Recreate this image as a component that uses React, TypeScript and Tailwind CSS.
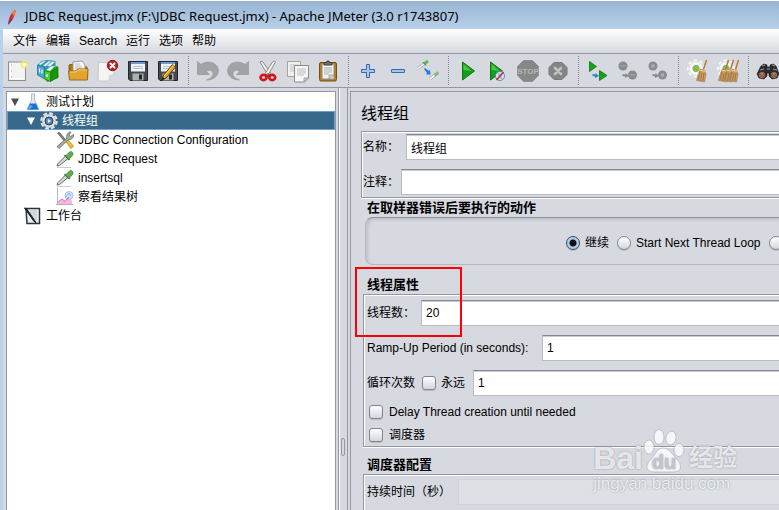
import type { ReactNode } from "react";

const LATIN_CJK = "font-['Liberation_Sans','Noto_Sans_CJK_SC',sans-serif]";

/* ---------- toolbar drawings (24 x 24) ---------- */

function Svg({ children, size = 24 }: { children: ReactNode; size?: number }) {
  return (
    <svg width={size} height={size} viewBox={`0 0 ${size} ${size}`} className="block shrink-0" aria-hidden="true">
      {children}
    </svg>
  );
}

const NewIcon = () => (
  <Svg>
    <rect x="2.500" y="3" width="17" height="18.500" fill="#f4f4f3" stroke="#8d8f8c" />
    <path d="M4.500 5v14.500h13" fill="none" stroke="#fff" />
    <path d="M5.500 5.500v1M5.500 11.500v1M5.500 17.500v1" stroke="#999" />
    <circle cx="18.500" cy="5.500" r="4" fill="#f7ea72" opacity=".75" />
    <circle cx="18.500" cy="5.500" r="1.800" fill="#fffde0" />
  </Svg>
);
const TemplatesIcon = () => (
  <Svg>
    <path d="M1.500 6l4-4 6-1 8 1v5l-8 3v8l-3 1-7-3z" fill="#2b93bd" />
    <path d="M1.500 6l7 2v12l-7-4z" fill="#46a9cf" stroke="#17718f" strokeWidth=".7" />
    <path d="M2.500 5l5-3 2 .5-5 3.500M7 6.500l6-4.500 2 .5-5.500 5M11 7l5-4.500 3 .5-5 4.500" fill="#e8f7f9" stroke="#7bb8ca" strokeWidth=".6" />
    <path d="M8.500 12l4-3 9-2 1 12-11 4-3-3z" fill="#27a11b" />
    <path d="M8.500 12l6 1v9.500l-6-3z" fill="#4fcb3c" stroke="#168c11" strokeWidth=".7" />
    <path d="M14.500 13l7.500-5v10l-7.500 4.500z" fill="#1c930f" stroke="#137a0c" strokeWidth=".7" />
    <path d="M10 11l5-3.500 4-.5-5 5z" fill="#e9f7e3" />
    <path d="M3.500 9.500v4M6 10.500v4M11 15v3" stroke="#fff" strokeWidth="1.200" />
  </Svg>
);
const OpenIcon = () => (
  <Svg>
    <path d="M3 10V6l5-1 1 2 12 1v11H4z" fill="#b17519" stroke="#8b5a10" />
    <path d="M7 13V3l9-1 3 4v8z" fill="#fafafa" stroke="#999" />
    <path d="M9 5h5M9 7h7M9 9h7" stroke="#bbb" />
    <path d="M2.500 12h7l2-2h10.500l-.5 11H3.500z" fill="#e1a332" stroke="#9c6816" />
    <path d="M4 13h6l2-2h9" fill="none" stroke="#f8d475" />
  </Svg>
);
const CloseIcon = () => (
  <Svg>
    <path d="M2.500 3.500H15l3 4V15l-6 7H2z" fill="#f5f5f4" stroke="#c7c8c8" />
    <path d="M12 22l1-6 5-1z" fill="#d9d9d9" />
    <circle cx="16.500" cy="6.500" r="5.200" fill="#bb2022" stroke="#89191a" />
    <path d="M14.500 4.500l4 4m0-4l-4 4" stroke="#fff" strokeWidth="2" strokeLinecap="round" />
  </Svg>
);
const FloppyBody = () => (
  <>
    <path d="M2.500 2.500h19v19H4l-1.500-1.500z" fill="#464a4e" stroke="#222527" />
    <rect x="5" y="3" width="14" height="9.500" fill="#edf3f8" />
    <rect x="5" y="3" width="14" height="2" fill="#6d9bd0" />
    <path d="M7 7.500h10M7 9.500h10" stroke="#b9c1c8" />
    <rect x="6.500" y="14.500" width="11" height="7" fill="#aeb0ad" />
    <rect x="13" y="15.500" width="3" height="5" fill="#25282b" />
  </>
);
const SaveIcon = () => (
  <Svg>
    <FloppyBody />
  </Svg>
);
const SaveAsIcon = () => (
  <Svg>
    <FloppyBody />
    <path d="M6 21l1-4L16.500 5.500l3 2.500-9.500 11z" fill="#efa41c" stroke="#533b11" />
    <path d="M8 17L17.500 6.500" stroke="#ffe26b" />
    <path d="M6 21l.7-3 2 1.800z" fill="#111" />
  </Svg>
);
const UndoShape = () => (
  <path
    d="M1.500 2.500l3.500 3c5-3.500 11-3 14.500 0 4 3.500 3.500 9 .5 12-2.500 2.500-6 3.500-9.500 3.500 5-2 7-4 6.500-7-.7-3-4-3.500-6.500-1.500l3 3H1.500z"
    fill="#a2a3a5"
    stroke="#949698"
    strokeWidth=".7"
  />
);
const UndoIcon = () => (
  <Svg>
    <UndoShape />
  </Svg>
);
const RedoIcon = () => (
  <Svg>
    <g transform="matrix(-1 0 0 1 24 0)">
      <UndoShape />
    </g>
  </Svg>
);
const CutIcon = () => (
  <Svg>
    <path d="M4 3l1-1 2 1 7.500 11-2 3z" fill="#f1f1ee" stroke="#8a8c88" />
    <path d="M19.500 3l-1-1-2 1L9.500 14l2 3z" fill="#f1f1ee" stroke="#8a8c88" />
    <ellipse cx="7.500" cy="18.500" rx="3" ry="2.600" fill="none" stroke="#d41418" strokeWidth="2.600" />
    <ellipse cx="16.200" cy="18.500" rx="3" ry="2.600" fill="none" stroke="#d41418" strokeWidth="2.600" />
    <path d="M9 15l3 1 3-1v3h-6z" fill="#cc1619" />
    <circle cx="12" cy="15" r=".8" fill="#333" />
  </Svg>
);
const CopyIcon = () => (
  <Svg>
    <path d="M1.500 2.500h13v15h-13z" fill="#efefed" stroke="#a3a5a3" />
    <path d="M4 6h8M4 8h4M4 10h4M4 12h4" stroke="#c5c5c5" />
    <path d="M8.500 6.500h14V19l-4 4H8.500z" fill="#f6f6f5" stroke="#8b8d8a" />
    <path d="M11 10h9M11 12h9M11 14h9M11 16h7" stroke="#bdbebd" />
    <path d="M18 22.500V19h4z" fill="#ddd" stroke="#8b8d8a" strokeWidth=".8" />
  </Svg>
);
const PasteIcon = () => (
  <Svg>
    <rect x="3.500" y="3.500" width="17" height="18.500" rx="1.500" fill="#b67a1b" stroke="#7c4d09" />
    <path d="M6 5h12v15H6z" fill="#f3f3f1" stroke="#8c8f89" />
    <path d="M8 9h8M8 11h8M8 13h8M8 15h5" stroke="#adafac" />
    <path d="M13 20v-4h5z" fill="#d3d4d2" stroke="#8c8f89" strokeWidth=".7" />
    <path d="M8 6V3.500h2.500L11 2h2l.5 1.500H16V6z" fill="#70736e" stroke="#3e413c" />
  </Svg>
);
const PlusIcon = () => (
  <Svg>
    <path d="M10.500 5.500h3v5h5v3h-5v5h-3v-5h-5v-3h5z" fill="#a5c8ec" stroke="#3569a9" strokeLinejoin="round" />
  </Svg>
);
const MinusIcon = () => (
  <Svg>
    <rect x="5.500" y="10.500" width="13" height="3" rx=".5" fill="#a5c8ec" stroke="#3569a9" />
  </Svg>
);
const ToggleIcon = () => (
  <Svg>
    <path d="M2 9.500l6-4.500" stroke="#a9ada9" strokeWidth="3" />
    <path d="M2 9.500l6-4.500" stroke="#fff" strokeWidth="1.500" />
    <path d="M8 5l4-3" stroke="#6ab65e" strokeWidth="3" />
    <path d="M7 3l3 3.500" stroke="#4b8a45" />
    <path d="M14 20l5-4" stroke="#b0b2b0" strokeWidth="3" />
    <path d="M14 20l5-4" stroke="#fff" strokeWidth="1.500" />
    <path d="M18.500 16.500l4-3" stroke="#7fbd74" strokeWidth="3" />
    <path d="M9 9l4 3 1-1.500.5 5H10l1-1.500L8 10z" fill="#2878ea" />
  </Svg>
);
const PlayIcon = () => (
  <Svg>
    <path d="M6.500 3v18l12-9z" fill="#13a017" stroke="#0c7612" />
    <path d="M7.500 5v6l8 1z" fill="#4dc34d" />
  </Svg>
);
const PlayNoPauseIcon = () => (
  <Svg>
    <path d="M4.500 3v18l12-9z" fill="#13a017" stroke="#0c7612" />
    <path d="M5.500 5v6l8 1z" fill="#4dc34d" />
    <circle cx="14" cy="17" r="4.500" fill="#dce6f1" stroke="#5688bf" />
    <path d="M10.500 21l7-8" stroke="#df2323" strokeWidth="1.600" />
    <path d="M13 14v4M15 16v4" stroke="#3c79b9" strokeWidth=".8" />
  </Svg>
);
const StopIcon = () => (
  <Svg>
    <path d="M7.500 1.500h9l6 6v9l-6 6h-9l-6-6v-9z" fill="#858789" stroke="#8f9193" />
    <text x="12" y="15" textAnchor="middle" fontSize="8" fontWeight="bold" fill="#b4b6b8" fontFamily="Liberation Sans">
      STOP
    </text>
  </Svg>
);
const ShutdownIcon = () => (
  <Svg>
    <path d="M8 3.500h8l5 5v7l-5 5H8l-5-5v-7z" fill="#838587" stroke="#77797b" />
    <path d="M9 9l6 6m0-6l-6 6" stroke="#c0c2c5" strokeWidth="2.600" strokeLinecap="round" />
  </Svg>
);
const RemoteArrow = ({ color }: { color: string }) => <path d="M6.500 15l3 .5V14l3.500 3-4 2v-1.500l-2.500-.5z" fill={color} />;
const RemoteStartIcon = () => (
  <Svg>
    <path d="M3.500 2.500v10l7-5zM13.500 11.500v10l7.500-5z" fill="#18a01b" stroke="#0c7912" strokeWidth=".8" />
    <RemoteArrow color="#3c7fc4" />
  </Svg>
);
const RemoteStopIcon = () => (
  <Svg>
    <circle cx="7" cy="7" r="4.500" fill="#898b8d" />
    <circle cx="16.500" cy="16" r="4.500" fill="#898b8d" />
    <path d="M4.500 7h5M14 16h5" stroke="#9fa1a4" strokeWidth="1.500" />
    <RemoteArrow color="#888a8d" />
  </Svg>
);
const RemoteShutdownIcon = () => (
  <Svg>
    <circle cx="7" cy="7" r="4.500" fill="#898b8d" />
    <circle cx="16.500" cy="16" r="4.500" fill="#898b8d" />
    <path d="M5.500 5.500l3 3m0-3l-3 3M15 14.500l3 3m0-3l-3 3" stroke="#adafb2" strokeWidth="1.300" />
    <RemoteArrow color="#888a8d" />
  </Svg>
);
const Broom = ({ x }: { x: number }) => (
  <g transform={`translate(${x} 0)`}>
    <path d="M16.500 10.500l3-9.500" stroke="#b07b3f" strokeWidth="1.500" />
    <path d="M13 10l5 1.500 1 4-1.500 7.500-8-1.500z" fill="#c89a61" stroke="#a97a41" strokeWidth=".6" />
    <path d="M13 13l-2 8M15 14l-1.500 8M17 14l-1 8" stroke="#946a38" strokeWidth=".7" />
    <path d="M12.500 11l6 1.500" stroke="#eed7a6" />
  </g>
);
const WhiteGear = () => (
  <>
    <circle cx="10" cy="9.500" r="7.500" fill="#fafafa" stroke="#fafafa" strokeWidth="3" strokeDasharray="3 2.500" />
    <circle cx="10" cy="9.500" r="7" fill="#f7f8f5" stroke="#c3c6c0" strokeWidth=".6" />
    <circle cx="10" cy="9.500" r="3.200" fill="#79c92b" stroke="#9da99a" />
  </>
);
const ClearIcon = () => (
  <Svg>
    <WhiteGear />
    <Broom x={1} />
  </Svg>
);
const ClearAllIcon = () => (
  <Svg>
    <WhiteGear />
    <Broom x={-7} />
    <Broom x={-2} />
    <Broom x={3} />
  </Svg>
);
const FindIcon = () => (
  <Svg>
    <path d="M5 7l3-2 3 1v2h3V6l3-1 3 2 3 8-2 4-5 1-3-3v-3h-2v3l-3 3-5-1-2-4z" fill="#2b2c2d" stroke="#151515" strokeWidth=".6" />
    <path d="M6 7l3-1M16 6l3 1M4 11l4-1M17 10l4 1M11 10h3" stroke="#9a9a98" />
    <circle cx="6" cy="16" r="2.800" fill="#ac5622" stroke="#777" />
    <circle cx="18" cy="16" r="2.800" fill="#ac5622" stroke="#777" />
    <path d="M5 15h2M17 15h2" stroke="#ec9e68" />
  </Svg>
);

type Tool = { name: string; icon: ReactNode; disabled?: boolean };
const TOOL_GROUPS: Tool[][] = [
  [
    { name: "New", icon: <NewIcon /> },
    { name: "Templates", icon: <TemplatesIcon /> },
    { name: "Open", icon: <OpenIcon /> },
    { name: "Close", icon: <CloseIcon /> },
    { name: "Save", icon: <SaveIcon /> },
    { name: "Save as", icon: <SaveAsIcon /> },
  ],
  [
    { name: "Undo", icon: <UndoIcon />, disabled: true },
    { name: "Redo", icon: <RedoIcon />, disabled: true },
    { name: "Cut", icon: <CutIcon /> },
    { name: "Copy", icon: <CopyIcon /> },
    { name: "Paste", icon: <PasteIcon /> },
  ],
  [
    { name: "Expand all", icon: <PlusIcon /> },
    { name: "Collapse all", icon: <MinusIcon /> },
    { name: "Toggle", icon: <ToggleIcon /> },
  ],
  [
    { name: "Start", icon: <PlayIcon /> },
    { name: "Start no pauses", icon: <PlayNoPauseIcon /> },
    { name: "Stop", icon: <StopIcon />, disabled: true },
    { name: "Shutdown", icon: <ShutdownIcon />, disabled: true },
  ],
  [
    { name: "Remote start all", icon: <RemoteStartIcon /> },
    { name: "Remote stop all", icon: <RemoteStopIcon />, disabled: true },
    { name: "Remote shutdown all", icon: <RemoteShutdownIcon />, disabled: true },
  ],
  [
    { name: "Clear", icon: <ClearIcon /> },
    { name: "Clear all", icon: <ClearAllIcon /> },
  ],
  [{ name: "Find", icon: <FindIcon /> }],
];

/* ---------- tree drawings (18 x 18) ---------- */

const FlaskIcon = () => (
  <Svg size={18}>
    <path d="M7 1h4M7.500 1v6L3 16.500h12L10.500 7V1" fill="#e4ebf2" stroke="#b4bcc6" />
    <path d="M6 10.500h6l2.500 6h-11z" fill="#1670d2" />
    <path d="M6 12l3 1-3 3H4z" fill="#5ba6ef" />
  </Svg>
);
const GearIcon = () => (
  <Svg size={18}>
    <circle cx="9" cy="9" r="7.200" fill="none" stroke="#e0e2e3" strokeWidth="3.200" strokeDasharray="3.600 2.050" />
    <circle cx="9" cy="9" r="6.800" fill="#dcdfe1" stroke="#b4b8ba" strokeWidth=".5" />
    <circle cx="9" cy="9" r="4" fill="#5b80ab" stroke="#20456f" />
    <path d="M7.800 6.800v4.400l3.200-2.200z" fill="#eaf2fa" />
  </Svg>
);
const ToolsIcon = () => (
  <Svg size={18}>
    <path d="M1.500 2l1.500-1 7 8-1.500 1.500z" fill="#777a7a" stroke="#525555" strokeWidth=".6" />
    <path d="M9.500 10l2-1.500 6 6.500-2.500 2.500z" fill="#f0c428" stroke="#9a7610" strokeWidth=".7" />
    <path d="M1 15.500L11 7c-1-3 1-6 4-6l-2 3 1.500 1.500 3-2C18 7 15 9 12.500 8.500L3 17.500z" fill="#a7acab" stroke="#5f6463" strokeWidth=".8" />
  </Svg>
);
const DropperIcon = () => (
  <Svg size={18}>
    <path d="M1 17.500h14" stroke="#ccc" />
    <path d="M1 16l1-2.500L9.500 6l2.500 2.500-8.500 7z" fill="#d4dada" stroke="#646968" />
    <path d="M8.500 5l5 5" stroke="#3e6e39" strokeWidth="1.500" />
    <path d="M9.500 6l4-4c1.500-1.500 4.500 1 3.300 3L13 9.500z" fill="#5fae52" stroke="#3d8235" strokeWidth=".7" />
  </Svg>
);
const ChartIcon = () => (
  <Svg size={18}>
    <path d="M1.500 0v17" stroke="#b9bac2" />
    <circle cx="13" cy="7.500" r="4" fill="#cfe3fb" stroke="#9fc3ee" />
    <path d="M2 14l4-3 3 2 4-4 3 4v3.500H2z" fill="#f0aedd" opacity=".85" />
    <path d="M2 14l4-3 3 2.500L13 9" fill="none" stroke="#dc6ab0" />
    <path d="M9 10l4-5 2 3" fill="none" stroke="#8bb3ee" />
    <path d="M0 16.500h17" stroke="#c99ec4" />
  </Svg>
);
const WorkbenchIcon = () => (
  <Svg size={18}>
    <path d="M2 1.500h13.500v15H3z" fill="#e9edef" stroke="#303336" strokeWidth="1.500" />
    <path d="M6 4h7M6 6h7M6 8h7M8 10h5M9 12h4" stroke="#b8c2c9" />
    <path d="M.5 1l2 .5L12 15.500l-2-1z" fill="#1c1e20" stroke="#222" />
  </Svg>
);

type Node = { label: string; icon: ReactNode; indent: string; open?: boolean; selected?: boolean };
const NODES: Node[] = [
  { label: "测试计划", icon: <FlaskIcon />, indent: "pl-1", open: true },
  { label: "线程组", icon: <GearIcon />, indent: "pl-5", open: true, selected: true },
  { label: "JDBC Connection Configuration", icon: <ToolsIcon />, indent: "pl-9" },
  { label: "JDBC Request", icon: <DropperIcon />, indent: "pl-9" },
  { label: "insertsql", icon: <DropperIcon />, indent: "pl-9" },
  { label: "察看结果树", icon: <ChartIcon />, indent: "pl-9" },
  { label: "工作台", icon: <WorkbenchIcon />, indent: "pl-1" },
];

function TreeRow({ node }: { node: Node }) {
  return (
    <li
      role="treeitem"
      aria-selected={!!node.selected}
      className={`flex h-[19px] items-center ${node.indent} ${
        node.selected ? "bg-[#39698a] text-white inset-ring inset-ring-[#6c9fce]" : ""
      }`}
    >
      <span className="w-[13px] shrink-0">
        {node.open && (
          <svg width="8" height="8" viewBox="0 0 8 8" className="block" aria-hidden="true">
            <path d="M0 .5h8L4 8z" fill={node.selected ? "#fff" : "#4b4f55"} />
          </svg>
        )}
      </span>
      {node.icon}
      <span className="pl-1 leading-4 whitespace-nowrap">{node.label}</span>
    </li>
  );
}

/* ---------- form controls ---------- */

function TextField({ id, value, disabled }: { id: string; value: string; disabled?: boolean }) {
  return (
    <input
      id={id}
      type="text"
      defaultValue={value}
      disabled={disabled}
      className={`h-[26px] min-w-0 flex-1 border border-r-0 px-1 outline-none ${
        disabled
          ? "border-[#d0d3d8] bg-[#dde1e6]"
          : "border-[#b9bcc2] border-t-[#85888f] bg-white shadow-[inset_0_1px_0_#c9cbcf]"
      }`}
    />
  );
}

function Check({ id }: { id: string }) {
  return (
    <input
      id={id}
      type="checkbox"
      className="size-[14px] shrink-0 appearance-none rounded-[3px] border border-[#7f858f] bg-linear-to-b from-white to-[#d3d6dc] shadow-[0_1px_0_#b9bdc5] checked:bg-[#7a9cb8]"
    />
  );
}

function Radio({ id, checked }: { id: string; checked?: boolean }) {
  return (
    <input
      id={id}
      type="radio"
      name="onError"
      defaultChecked={checked}
      aria-label={id}
      className="size-[14px] shrink-0 appearance-none rounded-full border border-[#7f858f] bg-linear-to-b from-white to-[#d3d6dc] shadow-[0_1px_0_#b9bdc5] checked:border-[#2f4c66] checked:bg-[radial-gradient(circle,#0b0f14_0_3px,#b4cbdc_4px)]"
    />
  );
}

function Heading({ children, className }: { children: ReactNode; className: string }) {
  return <h2 className={`h-[19px] pl-4 text-[13px] leading-5 font-bold ${className}`}>{children}</h2>;
}

const GROUP = "border border-r-0 border-[#9297a1] shadow-[inset_1px_1px_0_#fff,0_1px_0_#fff]";

function Watermark() {
  return (
    <div className="pointer-events-none absolute right-[42px] bottom-4 flex flex-col text-white/75 [text-shadow:0_0_2px_#8f939c]">
      <div className="flex h-[46px] items-end">
        <span className="text-[32px] leading-8 font-bold">Bai</span>
        <svg width="42" height="46" viewBox="0 0 42 46" aria-hidden="true">
          <g fill="#fff" fillOpacity=".75" stroke="#b4b8c0" strokeWidth=".8">
            <ellipse cx="6" cy="19" rx="5" ry="7" />
            <ellipse cx="16" cy="9" rx="5" ry="7.500" />
            <ellipse cx="28" cy="10" rx="5" ry="7" transform="rotate(12 28 10)" />
            <ellipse cx="36" cy="22" rx="5" ry="6.500" />
            <path d="M20 20c6 0 8 5 13 10s8 14-3 14H12C1 44 3 36 8 31s6-11 12-11z" />
          </g>
          <text x="21" y="41" textAnchor="middle" fontSize="20" fontWeight="bold" fontFamily="Liberation Sans" fill="#c3c6ce">
            du
          </text>
        </svg>
        <span className="pl-1 text-[24px] leading-8 font-bold">经验</span>
      </div>
      <span className="text-[17px] leading-5">jingyan.baidu.com</span>
    </div>
  );
}

export default function App() {
  return (
    <div className={`relative flex h-screen flex-col overflow-hidden bg-[#d6d9df] text-xs text-black ${LATIN_CJK}`}>
      <header className="flex h-[29px] shrink-0 items-center gap-1 border-t border-white bg-linear-to-b from-[#98b4d2] to-[#b9d1ea] pt-1 pl-1 font-['Noto_Sans','Open_Sans',sans-serif] text-[13px]">
        <svg width="17" height="17" viewBox="0 0 17 17" aria-hidden="true">
          <path d="M4 15C5 8 7 4 11 1l1 1-3 8-4 5z" fill="#d22b3b" />
          <path d="M8 4l3-3 1 1-2 5z" fill="#ef8b26" />
          <path d="M4 16l2-6 2 1z" fill="#71347e" />
        </svg>
        <h1 className="whitespace-nowrap">JDBC Request.jmx (F:\JDBC Request.jmx) - Apache JMeter (3.0 r1743807)</h1>
      </header>

      <div className="flex min-h-0 flex-1 flex-col border-l-3 border-[#b9d1ea]">
        <nav className="flex h-[25px] shrink-0 items-center gap-[9px] border-b border-[#9297a1] bg-linear-to-b from-white to-[#d6d9df] pl-[10px] whitespace-nowrap">
          {["文件", "编辑", "Search", "运行", "选项", "帮助"].map((m) => (
            <button key={m} type="button" className="leading-5">
              {m}
            </button>
          ))}
        </nav>

        <div role="toolbar" className="flex h-[34px] shrink-0 overflow-hidden border-b border-[#9297a1]">
          {TOOL_GROUPS.map((group, g) => (
            <div key={g} className="flex shrink-0">
              {g > 0 && (
                <span className="flex w-[10px] justify-center py-[2px]">
                  <span className="border-l border-dotted border-[#82868f]" />
                </span>
              )}
              {group.map((t) => (
                <button key={t.name} type="button" aria-label={t.name} disabled={t.disabled} className="flex w-[30px] items-center justify-center">
                  {t.icon}
                </button>
              ))}
            </div>
          ))}
        </div>

        <div className="flex min-h-0 flex-1 pt-[3px] pl-[3px]">
          <ul role="tree" className="w-[330px] shrink-0 border border-b-0 border-[#9297a1] bg-white">
            {NODES.map((n) => (
              <TreeRow key={n.label} node={n} />
            ))}
          </ul>

          <div role="separator" className="-mt-[3px] ml-[2px] flex w-[10px] shrink-0 items-end border-x border-[#9297a1] pb-[54px] pl-[2px] shadow-[inset_1px_0_0_#fff]">
            <span className="h-[18px] w-1 rounded-sm border border-[#9297a1]" />
          </div>

          <main className="ml-[2px] min-w-0 flex-1 overflow-hidden border-t border-l border-[#9297a1]">
            <h1 className="h-[39px] pt-[10px] pl-[10px] text-base leading-6">线程组</h1>

            <section className={`ml-[10px] flex flex-col gap-[9px] py-[2px] pl-px ${GROUP}`}>
              <div className="flex items-center">
                <label htmlFor="name" className="w-[43px] shrink-0 whitespace-nowrap">名称：</label>
                <TextField id="name" value="线程组" />
              </div>
              <div className="flex items-center">
                <label htmlFor="comments" className="w-[38px] shrink-0 whitespace-nowrap">注释：</label>
                <TextField id="comments" value="" />
              </div>
            </section>

            <Heading className="">在取样器错误后要执行的动作</Heading>
            <section className="ml-[14px] flex h-12 items-center overflow-hidden rounded-l-lg border border-r-0 border-[#b4b8bf] border-t-[#8b8f97] pt-1 pl-[200px] whitespace-nowrap shadow-[inset_2px_2px_3px_#bfc2c9]">
              <Radio id="continue" checked />
              <label htmlFor="continue" className="pr-2 pl-[5px]">继续</label>
              <Radio id="nextLoop" />
              <label htmlFor="nextLoop" className="pr-2 pl-[5px]">Start Next Thread Loop</label>
              <Radio id="stopThread" />
            </section>

            <div className="relative">
              <Heading className="mt-[10px]">线程属性</Heading>
              <section className={`ml-3 pt-[5px] pl-[3px] ${GROUP}`}>
                <div className="flex flex-col gap-[9px] pb-1">
                  <div className="flex items-center">
                    <label htmlFor="threads" className="w-[54px] shrink-0 whitespace-nowrap">线程数：</label>
                    <TextField id="threads" value="20" />
                  </div>
                  <div className="flex items-center">
                    <label htmlFor="ramp" className="w-[175px] shrink-0 whitespace-nowrap">Ramp-Up Period (in seconds):</label>
                    <TextField id="ramp" value="1" />
                  </div>
                  <div className="flex items-center whitespace-nowrap">
                    <label htmlFor="loops" className="w-[55px] shrink-0">循环次数</label>
                    <Check id="forever" />
                    <label htmlFor="forever" className="w-[37px] shrink-0 pl-[5px]">永远</label>
                    <TextField id="loops" value="1" />
                  </div>
                </div>
                <div className="flex h-[23px] items-center gap-[6px] pl-[2px]">
                  <Check id="delay" />
                  <label htmlFor="delay" className="whitespace-nowrap">Delay Thread creation until needed</label>
                </div>
                <div className="flex h-[23px] items-center gap-[6px] pl-[2px]">
                  <Check id="scheduler" />
                  <label htmlFor="scheduler">调度器</label>
                </div>
              </section>
              <div className="pointer-events-none absolute -top-[8px] left-1 h-[70px] w-[107px] border-2 border-[#fb0006]" />
            </div>

            <Heading className="mt-2">调度器配置</Heading>
            <section className={`ml-3 h-20 pt-1 pl-[3px] ${GROUP}`}>
              <div className="flex items-center">
                <label htmlFor="duration" className="w-[91px] shrink-0 whitespace-nowrap">持续时间（秒）</label>
                <TextField id="duration" value="" disabled />
              </div>
            </section>
          </main>
        </div>
      </div>
      <Watermark />
    </div>
  );
}
